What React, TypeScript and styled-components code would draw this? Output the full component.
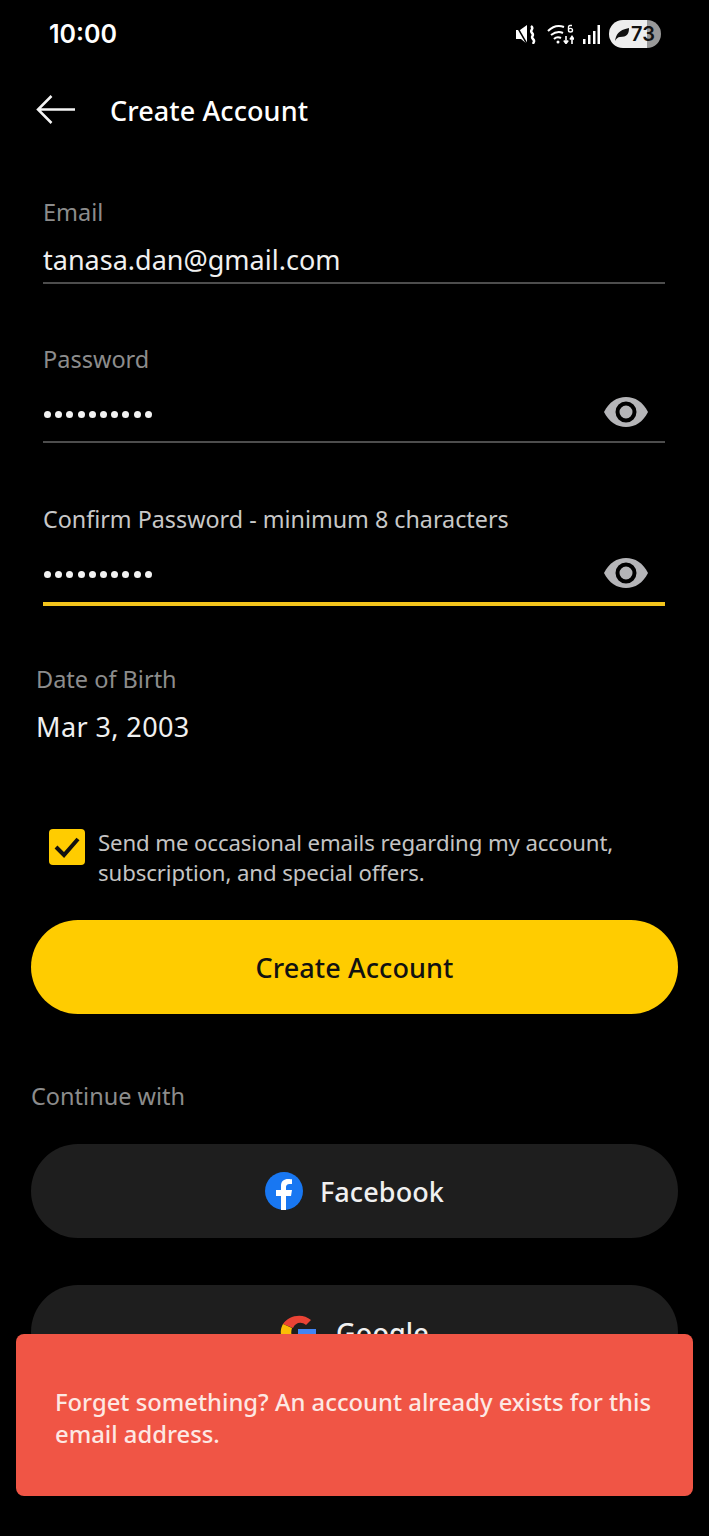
import styled, { createGlobalStyle } from "styled-components"

const GlobalStyle = createGlobalStyle`
  html, body {
    margin: 0;
    padding: 0;
    background: #000;
  }
  * {
    box-sizing: border-box;
  }
`

const Page = styled.div`
  position: relative;
  width: 709px;
  height: 1536px;
  overflow: hidden;
  background: #000;
  color: #fff;
  font-family: "Noto Sans", "Liberation Sans", sans-serif;
`
const StatusBar = styled.div`
  height: 68px;
  padding: 0 48px 0 49px;
  display: flex;
  justify-content: space-between;
  align-items: center;
`
const Time = styled.div`
  font-family: Inter, sans-serif;
  font-size: 25px;
  font-weight: 600;
`
const StatusIcons = styled.div`
  display: flex;
  align-items: center;
  gap: 9px;
`
const Battery = styled.div`
  width: 52px;
  height: 28px;
  border-radius: 14px;
  background: linear-gradient(90deg, #eee 0 73%, #999 73% 100%);
  color: #111;
  padding-left: 6px;
  display: flex;
  align-items: center;
  gap: 2px;
  font-family: Inter, sans-serif;
  font-size: 20px;
  font-weight: 600;
  line-height: 28px;
`
const Header = styled.div`
  height: 84px;
  padding-left: 36px;
  display: flex;
  align-items: center;
  gap: 35px;
`
const HeaderTitle = styled.div`
  font-size: 27px;
  font-weight: 500;
  letter-spacing: 0.1px;
`
const Fields = styled.div`
  padding: 0 44px 0 43px;
  margin-top: 46px;
`
const Field = styled.div<{ $height: number }>`
  height: ${p => p.$height}px;
  display: flex;
  flex-direction: column;
`
const Label = styled.div<{ $focused?: boolean }>`
  height: 28px;
  line-height: 28px;
  font-size: ${p => (p.$focused ? "23.3px" : "23.5px")};
  color: ${p => (p.$focused ? "#c8c8c8" : "#8c8c8c")};
`
const ValueRow = styled.div<{ $top: number; $height: number; $active?: boolean }>`
  margin-top: ${p => p.$top}px;
  height: ${p => p.$height}px;
  display: flex;
  align-items: center;
  justify-content: space-between;
  border-bottom: ${p => (p.$active ? "4px solid #f4c51c" : "2px solid #4d4d4d")};
`
const SecretRow = styled(ValueRow)`
  padding: 4px 17px 0 1px;
`
const Value = styled.div`
  font-size: 27px;
  color: #f0f0f0;
`
const Dots = styled.div`
  display: flex;
  gap: 4.2px;
  margin-top: 4px;
`
const Dot = styled.span`
  width: 7px;
  height: 7px;
  border-radius: 50%;
  background: #f2f2f2;
`
const DateBlock = styled.div`
  padding-left: 36px;
`
const DateValue = styled.div`
  margin-top: 16px;
  height: 36px;
  line-height: 36px;
  font-size: 27px;
  letter-spacing: 0.4px;
  color: #f0f0f0;
`
const ConsentRow = styled.div`
  display: flex;
  gap: 13px;
  padding-left: 49px;
  margin-top: 83px;
`
const Checkbox = styled.div`
  flex: none;
  width: 36px;
  height: 36px;
  margin-top: 1px;
  border-radius: 4px;
  background: #ffcc00;
  display: flex;
  align-items: center;
  justify-content: center;
`
const ConsentText = styled.div`
  font-size: 22.200px;
  letter-spacing: -0.1px;
  line-height: 30px;
  color: #c4c4c4;
`
const Actions = styled.div`
  padding: 0 31px;
`
const Pill = styled.div<{ $primary?: boolean }>`
  height: 94px;
  border-radius: 47px;
  display: flex;
  align-items: center;
  justify-content: center;
  gap: 17px;
  font-size: 27px;
  font-weight: 500;
  letter-spacing: 0.1px;
  background: ${p => (p.$primary ? "#ffcc00" : "#1e1e1e")};
  color: ${p => (p.$primary ? "#111" : "#f0f0f0")};
`
const CreateButton = styled(Pill)`
  margin-top: 32px;
`
const ContinueLabel = styled(Label)`
  margin-top: 68px;
`
const FacebookButton = styled(Pill)`
  margin-top: 34px;
`
const GoogleButton = styled(Pill)`
  margin-top: 47px;
  gap: 20px;
`
const Toast = styled.div`
  position: absolute;
  left: 16px;
  top: 1334px;
  width: 677px;
  height: 162px;
  padding: 6px 30px 0 39px;
  display: flex;
  align-items: center;
  border-radius: 8px;
  background: #f05545;
  color: #fde8e3;
  font-size: 23.800px;
  font-weight: 500;
  line-height: 32px;
`

const EyeIcon = () => (
  <svg width="44" height="30" viewBox="0 0 44 30">
    <path d="M0 15C5 5 13 0 22 0s17 5 22 15c-5 10-13 15-22 15S5 25 0 15z" fill="#b5b5b8" />
    <circle cx="22" cy="15" r="8.500" fill="none" stroke="#000" strokeWidth="4" />
  </svg>
)

const PasswordDots = () => (
  <Dots>
    {Array.from({ length: 10 }).map((_, i) => (
      <Dot key={i} />
    ))}
  </Dots>
)

const App = () => {
  return (
    <Page>
      <GlobalStyle />
      <StatusBar>
        <Time>10:00</Time>
        <StatusIcons>
          <svg width="22" height="19" viewBox="0 0 22 19">
            <path d="M0 5h4l7-5v19l-6-5H0z" fill="#fff" />
            <path d="M0 0l11 19" stroke="#000" strokeWidth="1.500" />
            <path d="M15 1c4 3-2 4 1 7s-2 3 1 6-1 3 1 5" stroke="#fff" strokeWidth="2.500" fill="none" />
          </svg>
          <svg width="27" height="20" viewBox="0 0 27 20">
            <path d="M1 7c5-5 11-6 16-4M4 11c4-3 8-4 12-2M7 15c2-2 5-2 7-1" stroke="#fff" strokeWidth="2" fill="none" />
            <circle cx="11" cy="18" r="1.500" fill="#fff" />
            <path d="M19 12v7m-2.200-2.500l2.200 3 2.200-3M25 20v-7m-2 2.500l2-3 2 3" stroke="#fff" strokeWidth="1.600" fill="none" />
            <path d="M25 1.500h-2q-1.500 0-1.500 2v3q0 1.500 2 1.500t2-1.800-2-1.800-2 1" stroke="#fff" strokeWidth="1.400" fill="none" />
          </svg>
          <svg width="17" height="19" viewBox="0 0 17 19">
            <rect x="0" y="14" width="2.500" height="5" fill="#fff" />
            <rect x="5" y="10" width="2.500" height="9" fill="#fff" />
            <rect x="10" y="6" width="2.500" height="13" fill="#fff" />
            <rect x="14.500" y="0" width="2.500" height="19" fill="#fff" />
          </svg>
          <Battery>
            <svg width="14" height="13" viewBox="0 0 14 13">
              <path d="M0 13C1 7 3 2 14 0c0 6-2 9-9 9-2 0-4 2-5 4z" fill="#111" />
            </svg>
            73
          </Battery>
        </StatusIcons>
      </StatusBar>

      <Header>
        <svg width="39" height="30" viewBox="0 0 39 30">
          <path d="M39 14.500H2M15.500 1L2 14.500 15.500 28" stroke="#f4f4f4" strokeWidth="2.500" fill="none" />
        </svg>
        <HeaderTitle>Create Account</HeaderTitle>
      </Header>

      <Fields>
        <Field $height={147}>
          <Label>Email</Label>
          <ValueRow $top={11} $height={47}>
            <Value>tanasa.dan@gmail.com</Value>
          </ValueRow>
        </Field>
        <Field $height={160}>
          <Label>Password</Label>
          <SecretRow $top={6} $height={64}>
            <PasswordDots />
            <EyeIcon />
          </SecretRow>
        </Field>
        <Field $height={160}>
          <Label $focused>Confirm Password - minimum 8 characters</Label>
          <SecretRow $top={6} $height={67} $active>
            <PasswordDots />
            <EyeIcon />
          </SecretRow>
        </Field>
      </Fields>

      <DateBlock>
        <Label>Date of Birth</Label>
        <DateValue>Mar 3, 2003</DateValue>
      </DateBlock>

      <ConsentRow>
        <Checkbox>
          <svg width="28" height="24" viewBox="0 0 28 24">
            <path d="M3 12l8 8L25 4" stroke="#111" strokeWidth="4" fill="none" />
          </svg>
        </Checkbox>
        <ConsentText>
          Send me occasional emails regarding my account,
          <br />
          subscription, and special offers.
        </ConsentText>
      </ConsentRow>

      <Actions>
        <CreateButton $primary>Create Account</CreateButton>
        <ContinueLabel>Continue with</ContinueLabel>
        <FacebookButton>
          <svg width="38" height="40" viewBox="0 0 38 40">
            <circle cx="19" cy="20" r="19" fill="#1877f2" />
            <path d="M16 39V25h-5v-6h5v-4c0-5 3-7 7-7 2 0 4 .3 4 .3V13h-2.500c-2.500 0-3.500 1.500-3.500 3v3h6l-1 6h-5v14z" fill="#fff" />
          </svg>
          Facebook
        </FacebookButton>
        <GoogleButton>
          <svg width="36" height="36" viewBox="0 0 36 36">
            <path d="M3 10C8 2 22-2 31 6l-5 5c-5-4-11-2-13 3z" fill="#ea4335" />
            <path d="M3 10c-3 5-3 11 0 16l9-4c-1-2-1-5 0-8z" fill="#fbbc05" />
            <path d="M18 15h18v8H18z" fill="#4285f4" />
          </svg>
          Google
        </GoogleButton>
      </Actions>

      <Toast>Forget something? An account already exists for this email address.</Toast>
    </Page>
  )
}

export default App
